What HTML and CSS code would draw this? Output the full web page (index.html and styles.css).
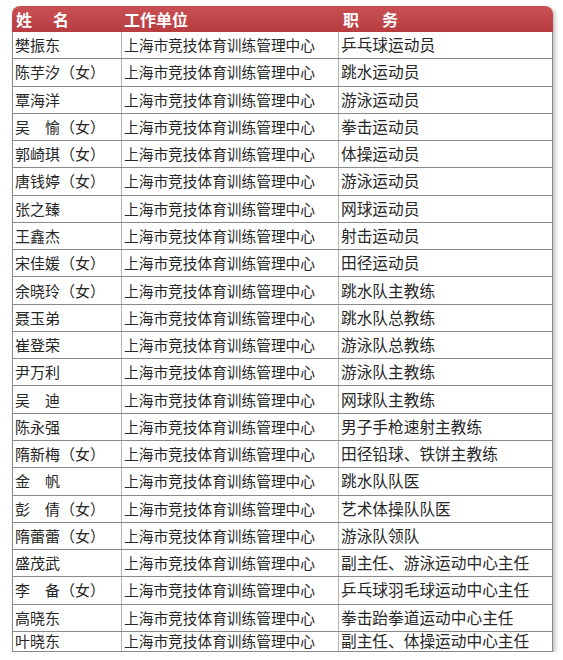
FILE: index.html
```html
<!DOCTYPE html>
<html lang="zh-CN">
<head>
<meta charset="utf-8">
<title>名单</title>
<link rel="stylesheet" href="styles.css">
</head>
<body>
<div class="page">
  <div class="sheet">
    <div class="head">
      <div class="hc c1"><span class="spaced">姓　名</span></div>
      <div class="hc c2">工作单位</div>
      <div class="hc c3"><span class="spaced wide">职　务</span></div>
    </div>
    <div class="rows">
      <div class="row"><div class="cell c1">樊振东</div><div class="cell c2">上海市竞技体育训练管理中心</div><div class="cell c3">乒乓球运动员</div></div>
      <div class="row"><div class="cell c1">陈芋汐（女）</div><div class="cell c2">上海市竞技体育训练管理中心</div><div class="cell c3">跳水运动员</div></div>
      <div class="row"><div class="cell c1">覃海洋</div><div class="cell c2">上海市竞技体育训练管理中心</div><div class="cell c3">游泳运动员</div></div>
      <div class="row"><div class="cell c1">吴　愉（女）</div><div class="cell c2">上海市竞技体育训练管理中心</div><div class="cell c3">拳击运动员</div></div>
      <div class="row"><div class="cell c1">郭崎琪（女）</div><div class="cell c2">上海市竞技体育训练管理中心</div><div class="cell c3">体操运动员</div></div>
      <div class="row"><div class="cell c1">唐钱婷（女）</div><div class="cell c2">上海市竞技体育训练管理中心</div><div class="cell c3">游泳运动员</div></div>
      <div class="row"><div class="cell c1">张之臻</div><div class="cell c2">上海市竞技体育训练管理中心</div><div class="cell c3">网球运动员</div></div>
      <div class="row"><div class="cell c1">王鑫杰</div><div class="cell c2">上海市竞技体育训练管理中心</div><div class="cell c3">射击运动员</div></div>
      <div class="row"><div class="cell c1">宋佳媛（女）</div><div class="cell c2">上海市竞技体育训练管理中心</div><div class="cell c3">田径运动员</div></div>
      <div class="row"><div class="cell c1">余晓玲（女）</div><div class="cell c2">上海市竞技体育训练管理中心</div><div class="cell c3">跳水队主教练</div></div>
      <div class="row"><div class="cell c1">聂玉弟</div><div class="cell c2">上海市竞技体育训练管理中心</div><div class="cell c3">跳水队总教练</div></div>
      <div class="row"><div class="cell c1">崔登荣</div><div class="cell c2">上海市竞技体育训练管理中心</div><div class="cell c3">游泳队总教练</div></div>
      <div class="row"><div class="cell c1">尹万利</div><div class="cell c2">上海市竞技体育训练管理中心</div><div class="cell c3">游泳队主教练</div></div>
      <div class="row"><div class="cell c1">吴　迪</div><div class="cell c2">上海市竞技体育训练管理中心</div><div class="cell c3">网球队主教练</div></div>
      <div class="row"><div class="cell c1">陈永强</div><div class="cell c2">上海市竞技体育训练管理中心</div><div class="cell c3">男子手枪速射主教练</div></div>
      <div class="row"><div class="cell c1">隋新梅（女）</div><div class="cell c2">上海市竞技体育训练管理中心</div><div class="cell c3">田径铅球、铁饼主教练</div></div>
      <div class="row"><div class="cell c1">金　帆</div><div class="cell c2">上海市竞技体育训练管理中心</div><div class="cell c3">跳水队队医</div></div>
      <div class="row"><div class="cell c1">彭　倩（女）</div><div class="cell c2">上海市竞技体育训练管理中心</div><div class="cell c3">艺术体操队队医</div></div>
      <div class="row"><div class="cell c1">隋蕾蕾（女）</div><div class="cell c2">上海市竞技体育训练管理中心</div><div class="cell c3">游泳队领队</div></div>
      <div class="row"><div class="cell c1">盛茂武</div><div class="cell c2">上海市竞技体育训练管理中心</div><div class="cell c3">副主任、游泳运动中心主任</div></div>
      <div class="row"><div class="cell c1">李　备（女）</div><div class="cell c2">上海市竞技体育训练管理中心</div><div class="cell c3">乒乓球羽毛球运动中心主任</div></div>
      <div class="row"><div class="cell c1">高晓东</div><div class="cell c2">上海市竞技体育训练管理中心</div><div class="cell c3">拳击跆拳道运动中心主任</div></div>
      <div class="row last"><div class="cell c1">叶晓东</div><div class="cell c2">上海市竞技体育训练管理中心</div><div class="cell c3">副主任、体操运动中心主任</div></div>
    </div>
  </div>
</div>
</body>
</html>
```

FILE: styles.css
```css
html, body {
  margin: 0;
  padding: 0;
  background: #ffffff;
}

.page {
  padding: 6px 0 0 12px;
  font-family: "Noto Sans CJK SC", "Noto Sans", sans-serif;
}

.sheet {
  width: 541px;
  box-shadow: 2px 2px 4px rgba(0, 0, 0, 0.28);
  border-radius: 8px 8px 0 0;
  background: #fff;
}

.head {
  display: grid;
  grid-template-columns: 110px 217px 214px;
  height: 26px;
  border-radius: 8px 8px 0 0;
  background: linear-gradient(#c95154, #b73c40);
  color: #fff;
  font-weight: 700;
  font-size: 16px;
  align-items: center;
}

.hc {
  line-height: 26px;
  white-space: nowrap;
}

.hc.c1 { padding-left: 4px; }
.hc.c2 { padding-left: 2px; }
.hc.c3 { padding-left: 4px; }

.spaced { letter-spacing: 2.5px; }
.spaced.wide { letter-spacing: 3.5px; }

.rows {
  border-left: 1px solid #8d8d8d;
  border-right: 1px solid #8d8d8d;
}

.row {
  display: grid;
  grid-template-columns: 109px 217px 213px;
  height: 27.27px;
  box-sizing: border-box;
  border-bottom: 1px solid #8a8a8a;
  color: #262626;
}

.row.last {
  height: 20px;
}

.cell {
  display: flex;
  align-items: center;
  white-space: nowrap;
  font-size: 15px;
  line-height: 16px;
}

.cell.c1 {
  padding-left: 2px;
  border-right: 1px solid #b4b4b4;
}

.cell.c2 {
  padding-left: 2px;
  font-size: 14.7px;
  border-right: 1px solid #b4b4b4;
}

.cell.c3 {
  padding-left: 2px;
  font-size: 15.7px;
}
```
